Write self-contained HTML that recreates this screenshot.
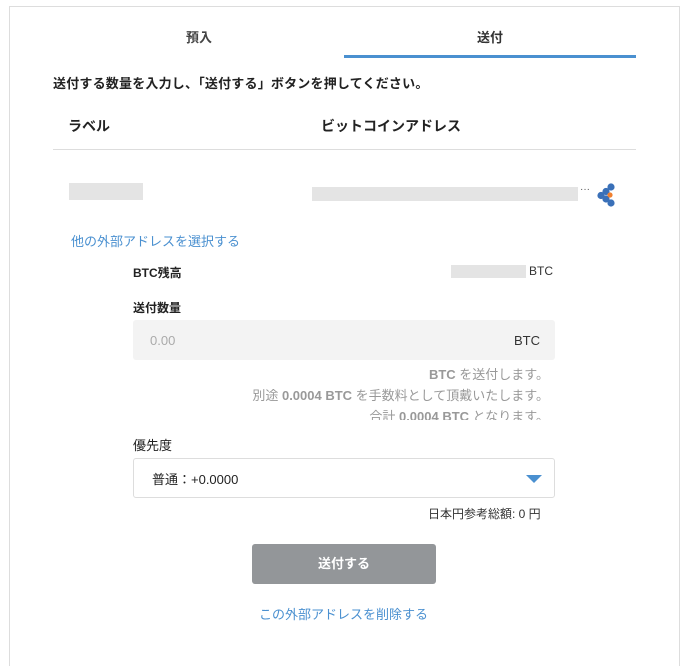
<!DOCTYPE html>
<html><head><meta charset="utf-8"><style>
*{margin:0;padding:0;box-sizing:border-box}
body{width:686px;height:650px;background:#fff;font-family:"Liberation Sans","Noto Sans CJK JP",sans-serif;color:#333;position:relative;overflow:hidden}
.card{position:absolute;left:9px;top:6px;width:671px;height:660px;border:1px solid #ddd;border-bottom:none}
.a{position:absolute;white-space:nowrap}
.gray{background:#e4e4e4;position:absolute}
</style></head><body>
<div class="card"></div>
<div class="a" style="left:186px;top:27px;font-size:13px;font-weight:bold;color:#444">預入</div>
<div class="a" style="left:477px;top:27px;font-size:13px;font-weight:bold;color:#333">送付</div>
<div class="a" style="left:344px;top:55px;width:292px;height:3px;background:#4a90d0"></div>
<div class="a" style="left:53px;top:73px;font-size:13px;font-weight:bold;color:#222;letter-spacing:0.2px">送付する数量を入力し、「送付する」ボタンを押してください。</div>
<div class="a" style="left:68px;top:116px;font-size:14px;font-weight:bold;color:#222">ラベル</div>
<div class="a" style="left:321px;top:116px;font-size:14px;font-weight:bold;color:#222">ビットコインアドレス</div>
<div class="a" style="left:53px;top:149px;width:583px;height:1px;background:#ddd"></div>
<div class="gray" style="left:69px;top:183px;width:74px;height:17px"></div>
<div class="gray" style="left:312px;top:187px;width:266px;height:14px"></div>
<div class="a" style="left:580px;top:184px;font-size:10px;color:#555">···</div>
<svg class="a" style="left:595px;top:183px" width="24" height="24" viewBox="0 0 24 24">
<circle cx="16" cy="4" r="3.6" fill="#3a70b8"/><circle cx="11" cy="8.5" r="3.6" fill="#3a70b8"/><circle cx="6" cy="12.5" r="3.6" fill="#3a70b8"/><circle cx="11" cy="16" r="3.6" fill="#3a70b8"/><circle cx="16" cy="20" r="3.6" fill="#3a70b8"/><circle cx="15" cy="12" r="2.6" fill="#f08030"/></svg>
<div class="a" style="left:71px;top:231px;font-size:13px;color:#4a90d0">他の外部アドレスを選択する</div>
<div class="a" style="left:133px;top:264px;font-size:12px;font-weight:bold;color:#222">BTC残高</div>
<div class="gray" style="left:451px;top:265px;width:75px;height:13px"></div>
<div class="a" style="left:529px;top:264px;font-size:12px;color:#333">BTC</div>
<div class="a" style="left:133px;top:299px;font-size:12px;font-weight:bold;color:#222">送付数量</div>
<div class="a" style="left:133px;top:320px;width:422px;height:40px;background:#f3f3f3;border-radius:3px"></div>
<div class="a" style="left:150px;top:333px;font-size:13px;color:#aaa">0.00</div>
<div class="a" style="left:514px;top:333px;font-size:13px;color:#333">BTC</div>
<div class="a" style="left:133px;top:364px;width:416px;height:56px;overflow:hidden;text-align:right;font-size:13px;color:#999;line-height:21px">
<div><b>BTC</b> を送付します。</div><div>別途 <b>0.0004 BTC</b> を手数料として頂戴いたします。</div><div>合計 <b>0.0004 BTC</b> となります。</div></div>
<div class="a" style="left:133px;top:435px;font-size:13px;color:#222">優先度</div>
<div class="a" style="left:133px;top:458px;width:422px;height:40px;border:1px solid #ddd;border-radius:3px"></div>
<div class="a" style="left:152px;top:469px;font-size:13px;color:#222">普通：+0.0000</div>
<div class="a" style="left:526px;top:475px;width:0;height:0;border-left:8px solid transparent;border-right:8px solid transparent;border-top:8px solid #4a90d0"></div>
<div class="a" style="left:428px;top:505px;font-size:12px;color:#333">日本円参考総額: 0 円</div>
<div class="a" style="left:252px;top:544px;width:184px;height:40px;background:#939699;border-radius:3px;color:#fff;font-size:13px;font-weight:bold;text-align:center;line-height:40px">送付する</div>
<div class="a" style="left:259px;top:604px;font-size:13px;color:#4a90d0">この外部アドレスを削除する</div>
</body></html>
